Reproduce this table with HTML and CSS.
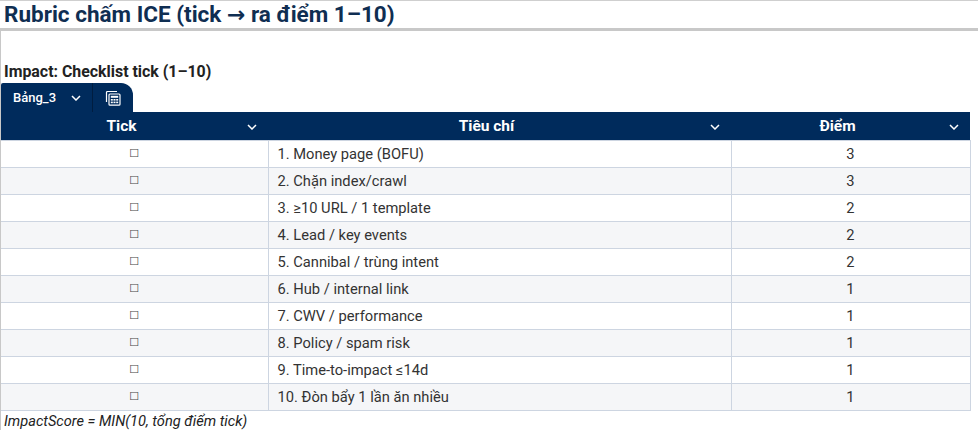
FILE: index.html
```html
<!DOCTYPE html>
<html lang="vi">
<head>
<meta charset="utf-8">
<title>Rubric chấm ICE</title>
<link rel="stylesheet" href="styles.css">
</head>
<body>
<h1 class="page-title">Rubric chấm ICE (tick <span class="arrow">→</span> ra điểm 1–10)</h1>
<section class="content">
  <h2 class="section-title">Impact: Checklist tick (1–10)</h2>
  <div class="tab">
    <span class="tab-name">Bảng_3</span>
    <svg class="tab-chevron" viewBox="0 0 10 6" width="10" height="6"><path d="M1 1l4 4 4-4" fill="none" stroke="#fff" stroke-width="1.5"/></svg>
    <span class="tab-sep"></span>
    <svg class="calc" viewBox="0 0 16 16" width="16" height="16">
      <path d="M1.5 12V2.5a1 1 0 0 1 1-1H12" fill="none" stroke="#fff" stroke-width="1.2"/>
      <rect x="4" y="4" width="11" height="11.2" rx="1" fill="none" stroke="#fff" stroke-width="1.2"/>
      <rect x="5.8" y="5.8" width="7.4" height="2" fill="#fff"/>
      <rect x="5.8" y="9" width="2" height="1.6" fill="#fff"/>
      <rect x="8.5" y="9" width="2" height="1.6" fill="#fff"/>
      <rect x="11.2" y="9" width="2" height="1.6" fill="#fff"/>
      <rect x="5.8" y="11.6" width="2" height="1.6" fill="#fff"/>
      <rect x="8.5" y="11.6" width="2" height="1.6" fill="#fff"/>
      <rect x="11.2" y="11.6" width="2" height="1.6" fill="#fff"/>
    </svg>
  </div>
  <table class="grid">
    <colgroup><col class="c1"><col class="c2"><col class="c3"></colgroup>
    <thead>
      <tr>
        <th><div class="th-in"><span class="th-text">Tick</span><svg class="chev" viewBox="0 0 10 6" width="10" height="6"><path d="M1 1l4 4 4-4" fill="none" stroke="#fff" stroke-width="1.5"/></svg></div></th>
        <th><div class="th-in"><span class="th-text">Tiêu chí</span><svg class="chev" viewBox="0 0 10 6" width="10" height="6"><path d="M1 1l4 4 4-4" fill="none" stroke="#fff" stroke-width="1.5"/></svg></div></th>
        <th><div class="th-in"><span class="th-text">Điểm</span><svg class="chev" viewBox="0 0 10 6" width="10" height="6"><path d="M1 1l4 4 4-4" fill="none" stroke="#fff" stroke-width="1.5"/></svg></div></th>
      </tr>
    </thead>
    <tbody>
      <tr><td class="tick">☐</td><td class="crit">1. Money page (BOFU)</td><td class="num">3</td></tr>
      <tr><td class="tick">☐</td><td class="crit">2. Chặn index/crawl</td><td class="num">3</td></tr>
      <tr><td class="tick">☐</td><td class="crit">3. ≥10 URL / 1 template</td><td class="num">2</td></tr>
      <tr><td class="tick">☐</td><td class="crit">4. Lead / key events</td><td class="num">2</td></tr>
      <tr><td class="tick">☐</td><td class="crit">5. Cannibal / trùng intent</td><td class="num">2</td></tr>
      <tr><td class="tick">☐</td><td class="crit">6. Hub / internal link</td><td class="num">1</td></tr>
      <tr><td class="tick">☐</td><td class="crit">7. CWV / performance</td><td class="num">1</td></tr>
      <tr><td class="tick">☐</td><td class="crit">8. Policy / spam risk</td><td class="num">1</td></tr>
      <tr><td class="tick">☐</td><td class="crit">9. Time-to-impact ≤14d</td><td class="num">1</td></tr>
      <tr><td class="tick">☐</td><td class="crit">10. Đòn bẩy 1 lần ăn nhiều</td><td class="num">1</td></tr>
    </tbody>
  </table>
  <p class="note">ImpactScore = MIN(10, tổng điểm tick)</p>
</section>
</body>
</html>
```

FILE: styles.css
```css
html, body {
  margin: 0;
  padding: 0;
  background: #fff;
  font-family: Roboto, "Noto Sans", "Liberation Sans", sans-serif;
}

.page-title {
  margin: 0;
  height: 27px;
  padding-left: 4px;
  border-top: 1px solid #cfcfcf;
  border-bottom: 3px solid #c8c8c8;
  font-size: 22.5px;
  line-height: 27px;
  font-weight: 700;
  color: #0f2e52;
  white-space: nowrap;
  overflow: hidden;
}

.arrow {
  font-family: "DejaVu Sans", sans-serif;
  font-size: 22px;
  line-height: 1;
}

.content {
  border-left: 1px solid #c8c8c8;
  padding: 31px 8px 0 0;
}

.section-title {
  margin: 0 0 2px 3px;
  font-size: 15.9px;
  line-height: 19px;
  font-weight: 700;
  color: #222;
}

.tab {
  display: inline-flex;
  align-items: center;
  height: 29px;
  width: 132px;
  box-sizing: border-box;
  background: #002b5c;
  border-top-right-radius: 12px;
  border-top-left-radius: 2px;
  color: #fff;
  vertical-align: top;
}

.tab-name {
  font-size: 13px;
  font-weight: 500;
  padding-left: 12px;
  width: 57px;
}

.tab-chevron {
  margin-left: 1px;
}

.tab-sep {
  align-self: stretch;
  width: 1px;
  background: #001d40;
  margin-left: 11px;
}

.calc {
  margin-left: 12px;
  margin-top: 1px;
}

.grid {
  width: 969px;
  border-collapse: collapse;
  table-layout: fixed;
  font-size: 14.7px;
  color: #333;
}

.c1 { width: 267px; }
.c2 { width: 463px; }
.c3 { width: 239px; }

.grid th {
  background: #002b5c;
  color: #fff;
  height: 28px;
  padding: 0;
  font-weight: 700;
  font-size: 15.5px;
}

.th-in {
  display: flex;
  align-items: center;
  padding-right: 11px;
}

.th-text {
  flex: 1;
  text-align: center;
}

.chev {
  margin-left: 5px;
  margin-top: 1px;
}

.grid td {
  height: 26px;
  padding: 0;
  border: 1px solid #cdd5e1;
  line-height: 26px;
}

.grid td:first-child {
  border-left: 0;
}

.grid tbody tr:nth-child(even) td {
  background: #f5f6f8;
}

.tick {
  text-align: center;
  font-family: "DejaVu Sans", sans-serif;
  font-size: 11px !important;
  color: #444;
}

.crit {
  padding-left: 9px !important;
}

.num {
  text-align: center;
}

.note {
  margin: 2px 0 0 3px;
  font-size: 14.6px;
  line-height: 17px;
  font-style: italic;
  color: #222;
}
```
